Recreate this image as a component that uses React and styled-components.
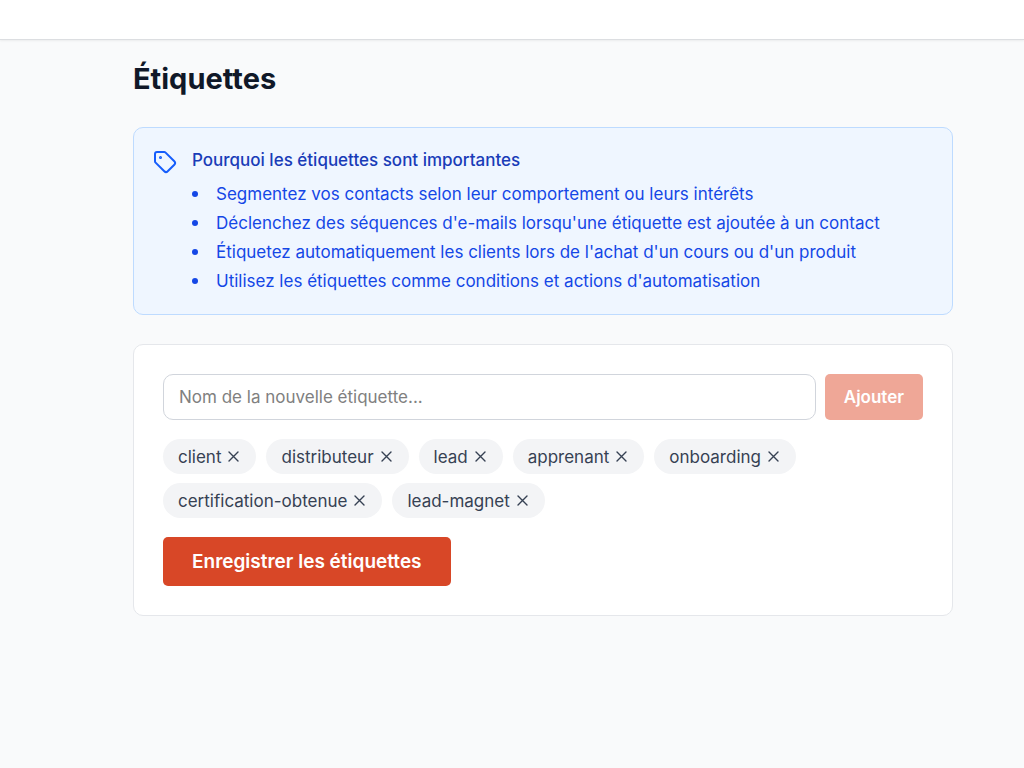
import React, { useState } from 'react';
import styled, { createGlobalStyle } from 'styled-components';
import { Tag } from 'lucide-react';

const GlobalStyle = createGlobalStyle`
  *,
  *::before,
  *::after {
    box-sizing: border-box;
  }

  body {
    margin: 0;
    background-color: #f9fafb;
    color: #101828;
    font-family: Inter, 'Liberation Sans', sans-serif;
    font-size: 17px;
    line-height: 24px;
  }

  button,
  input {
    font: inherit;
  }
`;

const StyledTopBar = styled.header`
  height: 40px;
  background-color: #fff;
  border-bottom: 1px solid #dcdee1;
  box-shadow: 0 1px 2px rgba(0, 0, 0, 0.06);
`;

const StyledMain = styled.main`
  padding: 20px 71px 40px 133px;
`;

const StyledTitle = styled.h1`
  margin: 0 0 29px;
  font-size: 29px;
  font-weight: 700;
  line-height: 38px;
`;

const StyledNotice = styled.section`
  display: flex;
  align-items: flex-start;
  gap: 15px;
  margin-bottom: 29px;
  padding: 20px 19px 16px;
  border: 1px solid #bedbff;
  border-radius: 10px;
  background-color: #eff6ff;
  color: #1447e6;

  svg {
    flex-shrink: 0;
    margin-top: 2px;
    color: #155dfc;
  }

  h2 {
    margin: 0 0 10px;
    color: #193cb8;
    font-size: 17px;
    font-weight: 500;
    line-height: 24px;
  }

  ul {
    margin: 0;
    padding: 0;
    list-style: none;
  }

  li {
    display: flex;
    align-items: center;
    gap: 18px;
    margin-bottom: 5px;
  }

  li::before {
    content: '';
    flex-shrink: 0;
    width: 6px;
    height: 6px;
    border-radius: 50%;
    background-color: currentColor;
  }
`;

const StyledCard = styled.section`
  padding: 29px;
  border: 1px solid #e5e7eb;
  border-radius: 10px;
  background-color: #fff;
`;

const StyledAddForm = styled.form`
  display: flex;
  gap: 9px;
  margin-bottom: 19px;
`;

const StyledInput = styled.input`
  flex: 1;
  min-width: 0;
  height: 46px;
  padding: 0 15px;
  border: 1px solid #d1d5dc;
  border-radius: 10px;
  background-color: #fff;
  color: #101828;

  &::placeholder {
    color: #808080;
    opacity: 1;
  }
`;

const StyledButton = styled.button`
  padding: ${({ $large }) => ($large ? '0 29px' : '0 19px')};
  height: ${({ $large }) => ($large ? '49px' : '46px')};
  border: 0;
  border-radius: 5px;
  background-color: #d84727;
  color: #fff;
  font-size: ${({ $large }) => ($large ? '19px' : '17px')};
  font-weight: 600;
  cursor: pointer;

  &:disabled {
    background-color: #efa797;
    cursor: not-allowed;
  }
`;

const StyledTagList = styled.ul`
  display: flex;
  flex-wrap: wrap;
  gap: 9px 10px;
  margin: 0 0 19px;
  padding: 0;
  list-style: none;
`;

const StyledTag = styled.li`
  display: flex;
  align-items: center;
  gap: 4px;
  height: 35px;
  padding: 0 14px 0 15px;
  border-radius: 18px;
  background-color: #f3f4f6;
  color: #364153;

  button {
    display: flex;
    padding: 0;
    border: 0;
    background: none;
    color: inherit;
    cursor: pointer;
  }
`;

const reasons = [
  'Segmentez vos contacts selon leur comportement ou leurs intérêts',
  "Déclenchez des séquences d'e-mails lorsqu'une étiquette est ajoutée à un contact",
  "Étiquetez automatiquement les clients lors de l'achat d'un cours ou d'un produit",
  "Utilisez les étiquettes comme conditions et actions d'automatisation",
];

const initialTags = [
  'client',
  'distributeur',
  'lead',
  'apprenant',
  'onboarding',
  'certification-obtenue',
  'lead-magnet',
];

const CrossIcon = () => (
  <svg
    width="17"
    height="17"
    viewBox="0 0 17 17"
    fill="none"
    stroke="currentColor"
    strokeWidth="1.4"
    strokeLinecap="round"
    aria-hidden="true">
    <path d="M4 4l9 9M13 4l-9 9" />
  </svg>
);

const App = () => {
  const [tags, setTags] = useState(initialTags);
  const [name, setName] = useState('');

  const addTag = e => {
    e.preventDefault();
    const value = name.trim();
    if (value && !tags.includes(value)) {
      setTags([...tags, value]);
    }
    setName('');
  };

  return (
    <>
      <GlobalStyle />
      <StyledTopBar />
      <StyledMain>
        <StyledTitle>Étiquettes</StyledTitle>

        <StyledNotice>
          <Tag size={24} strokeWidth={2} />
          <div>
            <h2>Pourquoi les étiquettes sont importantes</h2>
            <ul>
              {reasons.map((reason, i) => (
                <li key={i}>{reason}</li>
              ))}
            </ul>
          </div>
        </StyledNotice>

        <StyledCard>
          <StyledAddForm onSubmit={addTag}>
            <StyledInput
              type="text"
              aria-label="Nom de la nouvelle étiquette"
              placeholder="Nom de la nouvelle étiquette..."
              value={name}
              onChange={e => setName(e.target.value)}
            />
            <StyledButton type="submit" disabled={!name.trim()}>
              Ajouter
            </StyledButton>
          </StyledAddForm>

          <StyledTagList>
            {tags.map(tag => (
              <StyledTag key={tag}>
                {tag}
                <button
                  type="button"
                  aria-label={`Supprimer ${tag}`}
                  onClick={() => setTags(tags.filter(t => t !== tag))}>
                  <CrossIcon />
                </button>
              </StyledTag>
            ))}
          </StyledTagList>

          <StyledButton type="button" $large>
            Enregistrer les étiquettes
          </StyledButton>
        </StyledCard>
      </StyledMain>
    </>
  );
};

export default App;
